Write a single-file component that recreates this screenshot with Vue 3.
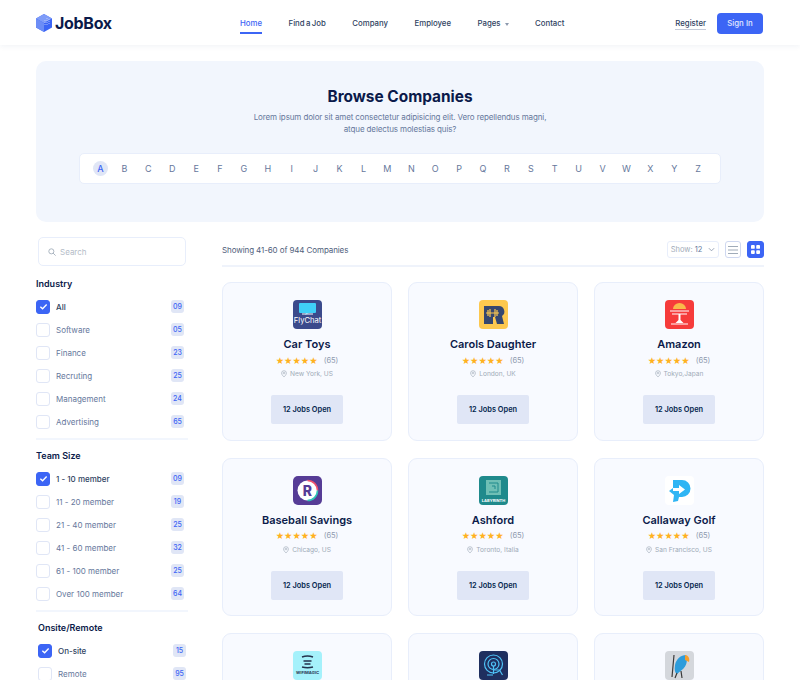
<template>
  <div class="page">
    <header class="topbar">
      <div class="brand">
        <svg class="brand-mark" viewBox="0 0 16 18" width="16" height="18">
          <path d="M8 0 16 4.500V13.500L8 18 0 13.500V4.500Z" fill="#3c65f5" />
          <path d="M8 0 16 4.500 8 9 0 4.500Z" fill="#7f9cf8" />
          <path d="M0 4.500 8 9V18L0 13.500Z" fill="#6c8df6" />
          <path d="M11 4v7M13 5v6M9 6v6" stroke="#c9d6fc" stroke-width="0.8" stroke-dasharray="1 1" />
        </svg>
        <span class="brand-name">JobBox</span>
      </div>
      <nav class="nav">
        <a v-for="item in navItems" :key="item.label" class="nav-link" :class="{ active: item.active }">
          {{ item.label }}<span v-if="item.caret" class="caret"></span>
        </a>
      </nav>
      <div class="auth">
        <a class="register">Register</a>
        <button class="signin">Sign In</button>
      </div>
    </header>

    <section class="hero">
      <h1>Browse Companies</h1>
      <p>Lorem ipsum dolor sit amet consectetur adipisicing elit. Vero repellendus magni,<br />atque delectus molestias quis?</p>
      <div class="letters">
        <span v-for="(l, i) in letters" :key="l" class="letter" :class="{ current: i === 0 }">{{ l }}</span>
      </div>
    </section>

    <div class="content">
      <aside class="sidebar">
        <div class="search">
          <svg viewBox="0 0 12 12" width="8" height="8" fill="none" stroke="#a0abb8" stroke-width="1.300">
            <circle cx="5" cy="5" r="3.800" />
            <path d="M8 8l3 3" stroke-linecap="round" />
          </svg>
          <span>Search</span>
        </div>

        <div v-for="group in filters" :key="group.title" class="filter" :class="{ shifted: group.shifted }">
          <h4>{{ group.title }}</h4>
          <div v-for="(row, i) in group.rows" :key="row[0]" class="filter-row" :class="{ on: i === 0 }">
            <span class="check">
              <svg v-if="i === 0" viewBox="0 0 10 10" width="9" height="9" fill="none" stroke="#fff" stroke-width="1.500">
                <path d="M1.500 5.200 4 7.500 8.500 2.800" />
              </svg>
            </span>
            <span class="filter-label">{{ row[0] }}</span>
            <span class="count">{{ row[1] }}</span>
          </div>
        </div>
      </aside>

      <main class="main">
        <div class="toolbar">
          <span class="showing">Showing 41-60 of 944 Companies</span>
          <div class="tools">
            <div class="show-select">
              <span class="show-label">Show:</span> <span class="show-value">12</span>
              <svg viewBox="0 0 8 5" width="7" height="5" fill="none" stroke="#8d99ae" stroke-width="1"><path d="M1 1l3 3 3-3" /></svg>
            </div>
            <button class="view-btn list">
              <svg viewBox="0 0 10 10" width="10" height="10" stroke="#a0abb8" stroke-width="1"><path d="M0 1.500h10M0 5h10M0 8.500h10" /></svg>
            </button>
            <button class="view-btn selected">
              <svg viewBox="0 0 10 10" width="9" height="9" fill="#fff">
                <rect width="4.200" height="4.200" rx="1" />
                <rect x="5.800" width="4.200" height="4.200" rx="1" />
                <rect y="5.800" width="4.200" height="4.200" rx="1" />
                <rect x="5.800" y="5.800" width="4.200" height="4.200" rx="1" />
              </svg>
            </button>
          </div>
        </div>

        <div class="grid">
          <article v-for="c in companies" :key="c.logo" class="card">
            <svg class="logo" viewBox="0 0 29 29" width="29" height="29">
              <template v-if="c.logo === 'flychat'">
                <rect width="29" height="29" rx="4" fill="#3b4a8c" />
                <path d="M7 3h15a1 1 0 0 1 1 1v8a1 1 0 0 1-1 1h-6l-4 2 1-2H7a1 1 0 0 1-1-1V4a1 1 0 0 1 1-1Z" fill="#3fd0f7" />
                <path d="M9 14h11" stroke="#fff" stroke-width="1" />
                <text x="14.500" y="23" text-anchor="middle" class="logo-text" font-size="7.600" fill="#fff">FlyChat</text>
              </template>
              <template v-else-if="c.logo === 'carols'">
                <rect width="29" height="29" rx="4" fill="#fdc84f" />
                <path d="M5 6h15a5.500 5.500 0 0 1 3 10l2 8h-7l-2-7h-2v7H5Z" fill="#36476f" />
                <path d="M7 13h13M9 10v6M11 9v8M16 9v8M18 10v6" stroke="#fdc84f" stroke-width="1.200" />
              </template>
              <template v-else-if="c.logo === 'amazon'">
                <rect width="29" height="29" rx="4" fill="#f63b3b" />
                <path d="M8 9a6.500 6 0 0 1 13 0Z" fill="#f9b84a" />
                <path d="M5 11h19M7 14h15" stroke="#fff" stroke-width="1.200" />
                <path d="M13.500 14h2v6l3 3h-8l3-3Z" fill="#fff" />
                <path d="M6 24h17" stroke="#fff" stroke-width="1" />
              </template>
              <template v-else-if="c.logo === 'baseball'">
                <rect width="29" height="29" rx="5" fill="#563c96" />
                <circle cx="14.500" cy="14.500" r="10" fill="#fff" />
                <path d="M14.500 4.500a10 10 0 0 1 10 10" fill="none" stroke="#f0506e" stroke-width="1.600" />
                <path d="M24.500 14.500a10 10 0 0 1-10 10" fill="none" stroke="#2ec4b6" stroke-width="1.600" />
                <text x="14.500" y="19.500" text-anchor="middle" class="logo-text" font-size="14" font-weight="800" fill="#563c96">R</text>
              </template>
              <template v-else-if="c.logo === 'labyrinth'">
                <rect width="29" height="29" rx="4" fill="#1f8a8c" />
                <rect x="7" y="4" width="15" height="15" fill="#6fbfb5" />
                <path d="M10 7h9v9h-9M13 10h3v3" fill="none" stroke="#1f8a8c" stroke-width="1" />
                <text x="14.500" y="25.500" text-anchor="middle" class="logo-text" font-size="4" font-weight="700" fill="#fff">LABYRINTH</text>
              </template>
              <template v-else-if="c.logo === 'callaway'">
                <rect width="29" height="29" rx="4" fill="#fff" />
                <path d="M8 4h9a8.500 8.500 0 0 1 0 17h-3l-1 4-5 1 1-7-5-4 4-3Z" fill="#2fb5f4" />
                <path d="M8 12h6v-3l6 4.500-6 4.500v-3H8Z" fill="#fff" />
              </template>
              <template v-else-if="c.logo === 'wifi'">
                <rect width="29" height="29" rx="4" fill="#a5f1fb" />
                <path d="M9 6q5.500-2 11 0M10.500 10h8M11.500 13h6M9 16q5.500 1.500 11 0" fill="none" stroke="#25324d" stroke-width="1.400" />
                <text x="14.500" y="23" text-anchor="middle" class="logo-text" font-size="4.100" font-weight="700" fill="#25324d">WIFIMAGIC</text>
              </template>
              <template v-else-if="c.logo === 'signal'">
                <rect width="29" height="29" rx="4" fill="#1f2f5f" />
                <circle cx="14.500" cy="13" r="9" fill="none" stroke="#4fc3f7" stroke-width="1.200" />
                <circle cx="14.500" cy="13" r="5.500" fill="none" stroke="#4fc3f7" stroke-width="1.200" />
                <circle cx="14.500" cy="13" r="2" fill="none" stroke="#4fc3f7" stroke-width="1.200" />
                <path d="M14.500 15v8M14.500 19h6l3 5M8 24h6" fill="none" stroke="#4fc3f7" stroke-width="1.200" />
              </template>
              <template v-else>
                <rect width="29" height="29" rx="4" fill="#d4d7dc" />
                <path d="M21 4c-5 0-10 4-11 10-.8 5 0 8 2 9l6-5c3-3 5-7 3-14Z" fill="#2d9cdb" />
                <path d="M20 4c3 0 5 3 4 7l-4-2Z" fill="#f59e2d" />
                <path d="M12 22l-2 5M16 20l1 7M9 4l-2 22" stroke="#3a3a3a" stroke-width="1.200" />
              </template>
            </svg>
            <template v-if="c.name">
              <h3>{{ c.name }}</h3>
              <div class="rating">
                <span class="stars">★★★★★</span>
                <span class="votes">(65)</span>
              </div>
              <div class="place">
                <svg viewBox="0 0 10 12" width="6" height="8" fill="none" stroke="#a0abb8" stroke-width="1.100">
                  <path d="M5 11S1 7.500 1 4.500a4 4 0 0 1 8 0C9 7.500 5 11 5 11Z" />
                  <circle cx="5" cy="4.500" r="1.300" />
                </svg>
                <span>{{ c.place }}</span>
              </div>
              <button class="open-btn">12 Jobs Open</button>
            </template>
          </article>
        </div>
      </main>
    </div>
  </div>
</template>

<script setup>
const navItems = [
  { label: 'Home', active: true },
  { label: 'Find a Job' },
  { label: 'Company' },
  { label: 'Employee' },
  { label: 'Pages', caret: true },
  { label: 'Contact' }
]

const letters = 'ABCDEFGHIJKLMNOPQRSTUVWXYZ'.split('')

const filters = [
  {
    title: 'Industry',
    rows: [['All', '09'], ['Software', '05'], ['Finance', '23'], ['Recruting', '25'], ['Management', '24'], ['Advertising', '65']]
  },
  {
    title: 'Team Size',
    rows: [['1 - 10 member', '09'], ['11 - 20 member', '19'], ['21 - 40 member', '25'], ['41 - 60 member', '32'], ['61 - 100 member', '25'], ['Over 100 member', '64']]
  },
  {
    title: 'Onsite/Remote',
    shifted: true,
    rows: [['On-site', '15'], ['Remote', '95']]
  }
]

// the last row is cut by the window, only its logos show
const companies = [
  { logo: 'flychat', name: 'Car Toys', place: 'New York, US' },
  { logo: 'carols', name: 'Carols Daughter', place: 'London, UK' },
  { logo: 'amazon', name: 'Amazon', place: 'Tokyo,Japan' },
  { logo: 'baseball', name: 'Baseball Savings', place: 'Chicago, US' },
  { logo: 'labyrinth', name: 'Ashford', place: 'Toronto, Italia' },
  { logo: 'callaway', name: 'Callaway Golf', place: 'San Francisco, US' },
  { logo: 'wifi' },
  { logo: 'signal' },
  { logo: 'parrot' }
]
</script>

<style>
html, body {
  margin: 0;
  overflow: hidden;
  background: #fff;
}
</style>

<style scoped>
.page {
  width: 800px;
  height: 680px;
  overflow: hidden;
  font-family: Inter, "Liberation Sans", sans-serif;
  color: #05264e;
}

.topbar {
  height: 45px;
  display: flex;
  align-items: center;
  padding: 0 37px 0 36px;
  box-sizing: border-box;
  box-shadow: 0 1px 6px rgba(30, 60, 120, 0.07);
}

.brand {
  width: 204px;
  display: flex;
  align-items: center;
  gap: 3px;
}

.brand-name {
  font-size: 16px;
  font-weight: 700;
  color: #0b1a4a;
  letter-spacing: -0.3px;
}

.nav {
  display: flex;
  gap: 26.500px;
  height: 100%;
}

.nav-link {
  position: relative;
  display: flex;
  align-items: center;
  font-size: 7.800px;
  font-weight: 500;
  word-spacing: -0.7px;
  color: #2f3f5f;
  padding-top: 1px;
  box-sizing: border-box;
}

.nav-link.active {
  color: #3c65f5;
}

.nav-link.active::after {
  content: "";
  position: absolute;
  left: 0;
  right: 0;
  bottom: 11.500px;
  height: 1.500px;
  background: #3c65f5;
}

.caret {
  margin-left: 4px;
  margin-top: 2px;
  border-left: 2.500px solid transparent;
  border-right: 2.500px solid transparent;
  border-top: 3px solid #8d99ae;
}

.auth {
  margin-left: auto;
  display: flex;
  align-items: center;
  gap: 11px;
}

.register {
  font-size: 7.800px;
  font-weight: 500;
  color: #2f3f5f;
  border-bottom: 1px solid #c5cbd8;
  line-height: 11px;
  margin-top: 2px;
}

.signin {
  width: 46px;
  height: 21px;
  margin-top: 1px;
  padding: 0;
  border: none;
  border-radius: 4px;
  background: #3c65f5;
  color: #e4ebff;
  font: 500 7.800px Inter, sans-serif;
}

.hero {
  margin: 16px 36px 0;
  height: 161px;
  padding-top: 27px;
  box-sizing: border-box;
  background: #f2f6fd;
  border-radius: 10px;
  text-align: center;
}

.hero h1 {
  margin: 0;
  font-size: 15.400px;
  line-height: 17px;
  font-weight: 700;
  color: #0b1a4a;
}

.hero p {
  margin: 6px 0 0;
  font-size: 8px;
  letter-spacing: -0.12px;
  line-height: 12px;
  color: #66789c;
}

.letters {
  margin: 18px 43px 0;
  height: 31px;
  box-sizing: border-box;
  background: #fff;
  border: 1px solid #e8eefb;
  border-radius: 5px;
  padding: 0 14px 0 13px;
  display: flex;
  align-items: center;
  justify-content: space-between;
}

.letter {
  width: 15px;
  height: 15px;
  line-height: 15px;
  text-align: center;
  font-size: 9px;
  color: #66789c;
  border-radius: 50%;
}

.letter.current {
  background: #e0e6f6;
  color: #3c65f5;
  font-weight: 500;
}

.content {
  margin: 15px 36px 0;
  display: flex;
  gap: 34px;
}

.sidebar {
  width: 152px;
  flex-shrink: 0;
}

.search {
  margin: 0 2px 11px;
  height: 29px;
  box-sizing: border-box;
  border: 1px solid #e8eefb;
  border-radius: 5px;
  display: flex;
  align-items: center;
  gap: 4px;
  padding-left: 9px;
  font-size: 8px;
  color: #b4bcc8;
}

.filter {
  padding-bottom: 5px;
  margin-bottom: 9px;
  border-bottom: 2px solid #f2f6fd;
}

.filter.shifted {
  border-bottom: none;
  padding-left: 2px;
  margin-right: -2px;
}

.filter h4 {
  margin: 0 0 4px;
  font-size: 9px;
  line-height: 14px;
  font-weight: 600;
  color: #0b1a4a;
}

.filter-row {
  height: 23px;
  display: flex;
  align-items: center;
  font-size: 8px;
  color: #66789c;
}

.filter-row.on {
  color: #2f3f5f;
  font-weight: 500;
}

.check {
  width: 14px;
  height: 14px;
  box-sizing: border-box;
  border: 1px solid #e0e6f6;
  border-radius: 3px;
  margin-right: 6px;
  display: flex;
  align-items: center;
  justify-content: center;
}

.on .check {
  background: #3c65f5;
  border-color: #3c65f5;
}

.count {
  margin-left: auto;
  margin-right: 4px;
  width: 13px;
  height: 13px;
  line-height: 13px;
  border-radius: 3px;
  background: #e0e6f6;
  color: #3c65f5;
  font-size: 7px;
  font-weight: 500;
  text-align: center;
}

.main {
  flex: 1;
}

.toolbar {
  height: 25px;
  display: flex;
  align-items: center;
  justify-content: space-between;
  padding-bottom: 3px;
  border-bottom: 2px solid #eff3fb;
}

.showing {
  font-size: 8px;
  letter-spacing: -0.1px;
  color: #4f5e7b;
}

.tools {
  display: flex;
  align-items: center;
  gap: 6px;
}

.show-select {
  width: 52px;
  height: 17px;
  box-sizing: border-box;
  border: 1px solid #e8eefb;
  border-radius: 3px;
  display: flex;
  align-items: center;
  justify-content: center;
  gap: 2px;
  font-size: 7.500px;
}

.show-label {
  color: #a0abb8;
}

.show-value {
  color: #66789c;
  margin-right: 4px;
}

.view-btn {
  width: 17px;
  height: 17px;
  padding: 0;
  box-sizing: border-box;
  border: 1px solid #cfd8f0;
  border-radius: 3px;
  background: #fff;
  display: flex;
  align-items: center;
  justify-content: center;
}

.view-btn.list {
  width: 16px;
}

.view-btn.selected {
  background: #3c65f5;
  border-color: #3c65f5;
}

.grid {
  margin-top: 15px;
  display: grid;
  grid-template-columns: repeat(3, 170px);
  column-gap: 16px;
  row-gap: 17px;
}

.card {
  height: 158.500px;
  box-sizing: border-box;
  border: 1px solid #e8eefb;
  border-radius: 9px;
  background: #f8faff;
  display: flex;
  flex-direction: column;
  align-items: center;
  padding-top: 17px;
}

.logo-text {
  font-family: Inter, sans-serif;
}

.card h3 {
  margin: 7px 0 0;
  font-size: 11px;
  line-height: 16px;
  font-weight: 600;
  color: #0b1a4a;
}

.rating {
  margin-top: 2px;
  display: flex;
  align-items: center;
  gap: 6px;
  height: 12px;
}

.stars {
  font-family: "DejaVu Sans", sans-serif;
  color: #ffb21f;
  font-size: 9.400px;
}

.votes {
  font-size: 7.500px;
  color: #8d99ae;
}

.place {
  margin-top: 2px;
  height: 12px;
  display: flex;
  align-items: center;
  gap: 3px;
  font-size: 6.600px;
  color: #a0abb8;
}

.open-btn {
  margin-top: 15px;
  width: 72px;
  height: 29px;
  padding: 0;
  border: none;
  border-radius: 2px;
  background: #e0e6f6;
  color: #05264e;
  font: 600 7.400px Inter, sans-serif;
}
</style>
